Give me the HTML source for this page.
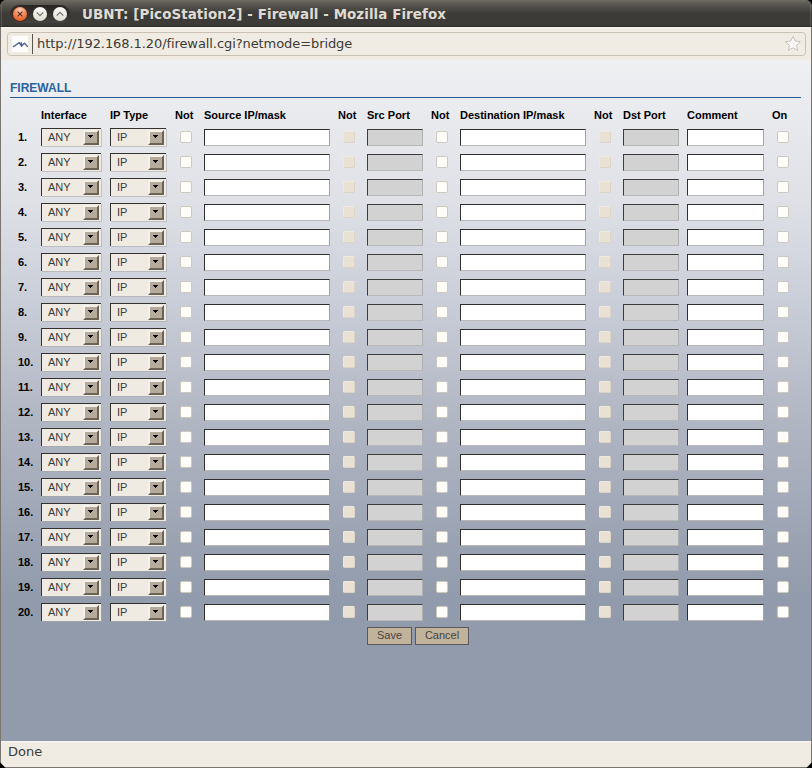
<!DOCTYPE html>
<html><head><meta charset="utf-8"><title>UBNT: [PicoStation2] - Firewall - Mozilla Firefox</title>
<style>
html,body{margin:0;padding:0;}
body{width:812px;height:768px;overflow:hidden;background:#000;position:relative;font-family:"Liberation Sans",Arial,sans-serif;font-size:11px;color:#000;}
#win{position:absolute;left:0;top:0;width:812px;height:768px;overflow:hidden;border-radius:6.5px 6.5px 0 0;background:#7a756e;}
#title{position:absolute;left:0;top:0;width:812px;height:27px;background:linear-gradient(#706d64 0px,#5f5d55 3px,#4c4b45 8px,#3e3d39 13px,#3c3b37 15px,#3c3b37 25px,#2d2c29 26.5px,#2b2a27 27px);}
#title .t{position:absolute;left:82px;top:7px;letter-spacing:0.07px;font-family:"DejaVu Sans",sans-serif;font-weight:bold;font-size:13.45px;color:#dfdbd2;white-space:nowrap;}
#pill{position:absolute;left:10px;top:5px;width:60px;height:18px;border-radius:9px;background:linear-gradient(#262522,#33322e 50%,#45443f);}
.wb{position:absolute;top:7px;width:14px;height:14px;border-radius:50%;}
#tool{position:absolute;left:1px;top:27px;width:810px;height:33px;background:linear-gradient(#f7f5f0 0,#f0ece4 2px,#efebe3 33px);}
#url{position:absolute;left:6px;top:5px;width:797px;height:22px;border:1px solid #c9c2b4;border-radius:3.5px;background:#f0ece3;}
#url .fav{position:absolute;left:4px;top:3px;width:16px;height:16px;background:#fdfdfd;}
#url .star{position:absolute;left:776px;top:1px;}
#url .sep{position:absolute;left:24px;top:1px;width:1px;height:20px;background:#5a564e;}
#url .u{position:absolute;left:29px;top:3px;font-family:"DejaVu Sans",sans-serif;font-size:13px;letter-spacing:-0.08px;color:#3c3b37;white-space:nowrap;}
#content{position:absolute;left:1px;top:60px;width:810px;height:681px;background:linear-gradient(#eef0f2 0px,#dfe1e7 140px,#caced8 240px,#b1b6c3 360px,#9ba3b3 480px,#929bab 540px,#929bab 681px);}
#status{position:absolute;left:1px;top:741px;width:810px;height:26px;background:linear-gradient(#f8f6f2 0,#f0ece4 2px,#efebe3 26px);}
#status span{position:absolute;left:7px;top:3px;font-family:"DejaVu Sans",sans-serif;font-size:13px;color:#3c3b37;}
#fw{position:absolute;left:10px;top:81px;font-weight:bold;font-size:12px;color:#2a62a3;}
#hr{position:absolute;left:10px;top:97px;width:791px;height:1px;background:#295a92;}
.cut{position:absolute;top:764px;width:8px;height:8px;background:#000;transform:rotate(45deg);z-index:5;}
.h{position:absolute;top:109px;font-weight:bold;font-size:11px;white-space:nowrap;}
.row{position:absolute;left:0;width:812px;height:18px;}
.num{position:absolute;left:18px;top:3px;font-weight:bold;}
.sel{position:absolute;top:0;height:18px;box-sizing:border-box;border:solid #33322f;border-width:1px 0 0 1px;background:#efebe3;box-shadow:1px 1px 0 rgba(165,165,165,0.55);}
.st{position:absolute;left:6px;top:2px;color:#3c3b37;}
.sb{position:absolute;right:2px;top:1px;width:16px;height:15px;box-sizing:border-box;background:#b6aa9a;border-style:solid;border-width:2px;border-color:#f4f1eb #6c6357 #6c6357 #f4f1eb;}
.sb i{position:absolute;left:3px;top:3px;width:5px;height:1px;background:#000;}
.sb i:before{content:"";position:absolute;left:1px;top:1px;width:3px;height:1px;background:#000;}
.sb i:after{content:"";position:absolute;left:2px;top:2px;width:1px;height:1px;background:#000;}
.cb{position:absolute;top:3px;width:12px;height:12px;box-sizing:border-box;border:1px solid #cec9bf;border-radius:2px;background:#fffefb;}
.cb.d{background:#eae1d5;border-color:#eee9e1 #ddd4c8 #ddd4c8 #eee9e1;}
.tx{position:absolute;top:1px;height:17px;box-sizing:border-box;border:1px solid;border-color:#2f2f2f #a2a2a2 #b8b8b8 #2f2f2f;background:#fff;}
.tx.d{background:#d2d2d2;border-color:#3c3c3c #b0b0b0 #b8b8b8 #3c3c3c;}
.btn{position:absolute;top:627px;height:18px;box-sizing:border-box;border:1px solid #58585e;background:#c1b29c;color:#48443f;text-align:center;line-height:14px;}
</style></head><body>
<div id="win">
<div id="title"><div style="position:absolute;left:1px;top:5px;width:1px;height:22px;background:rgba(255,255,255,0.13)"></div><div style="position:absolute;left:810px;top:5px;width:1px;height:22px;background:rgba(255,255,255,0.13)"></div><div id="pill"></div>
<div class="wb" style="left:13px;box-shadow:0 0 0 1px #4b2a1d;background:radial-gradient(circle at 50% 22%,#f9cbb6 0,#f19265 40%,#ea6a35 70%,#cf5424 100%)"><svg width="14" height="14" viewBox="0 0 14 14"><path d="M4.6 4.6L9.4 9.4M9.4 4.6L4.6 9.4" stroke="#5a2a18" stroke-width="1.15" fill="none"/></svg></div>
<div class="wb" style="left:33px;background:linear-gradient(#fbfaf7,#e2ded4)"><svg width="14" height="14" viewBox="0 0 14 14"><path d="M3.7 5.4L7 8.7L10.3 5.4" stroke="#77756f" stroke-width="1.3" fill="none"/></svg></div>
<div class="wb" style="left:53px;background:linear-gradient(#fbfaf7,#e2ded4)"><svg width="14" height="14" viewBox="0 0 14 14"><path d="M3.7 8.6L7 5.3L10.3 8.6" stroke="#77756f" stroke-width="1.3" fill="none"/></svg></div>
<div class="t">UBNT: [PicoStation2] - Firewall - Mozilla Firefox</div></div>
<div id="tool"><div id="url"><div class="fav"><svg width="16" height="16" viewBox="0 0 16 16"><path d="M1.5 10.5C3.4 10 5.2 7.6 7.2 6.7L9.6 9.7L12.4 7.2C13.4 7.8 14.4 9.6 15.4 10.4" stroke="#50669a" stroke-width="1.5" fill="none" stroke-linecap="round" stroke-linejoin="round"/><path d="M9.2 6.6L9.7 10.2" stroke="#3d5284" stroke-width="1.2" fill="none" stroke-linecap="round"/></svg></div><div class="sep"></div><svg class="star" width="18" height="18" viewBox="784 34 18 18"><path d="M793 36.2L795.2 41L800.3 41.6L796.6 45.3L797.5 50.3L793 47.8L788.5 50.3L789.4 45.3L785.3 41.6L790.8 41Z" fill="#f9f8f6" stroke="#c6c2ba" stroke-width="1" stroke-linejoin="round"/></svg><div class="u">http://192.168.1.20/firewall.cgi?netmode=bridge</div></div></div>
<div id="content"></div>
<div id="fw">FIREWALL</div><div id="hr"></div>
<span class="h" style="left:41px">Interface</span>
<span class="h" style="left:110px">IP Type</span>
<span class="h" style="left:175px">Not</span>
<span class="h" style="left:204px">Source IP/mask</span>
<span class="h" style="left:338px">Not</span>
<span class="h" style="left:367px">Src Port</span>
<span class="h" style="left:431px">Not</span>
<span class="h" style="left:460px">Destination IP/mask</span>
<span class="h" style="left:594px">Not</span>
<span class="h" style="left:623px">Dst Port</span>
<span class="h" style="left:687px">Comment</span>
<span class="h" style="left:772px">On</span>
<div class="row" style="top:128px"><span class="num">1.</span><span class="sel" style="left:41px;width:60px"><span class="st">ANY</span><span class="sb"><i></i></span></span><span class="sel" style="left:110px;width:56px"><span class="st">IP</span><span class="sb"><i></i></span></span><span class="cb" style="left:180px"></span><span class="tx" style="left:204px;width:126px"></span><span class="cb d" style="left:343px"></span><span class="tx d" style="left:367px;width:56px"></span><span class="cb" style="left:436px"></span><span class="tx" style="left:460px;width:126px"></span><span class="cb d" style="left:599px"></span><span class="tx d" style="left:623px;width:56px"></span><span class="tx" style="left:687px;width:77px"></span><span class="cb" style="left:777px"></span></div>
<div class="row" style="top:153px"><span class="num">2.</span><span class="sel" style="left:41px;width:60px"><span class="st">ANY</span><span class="sb"><i></i></span></span><span class="sel" style="left:110px;width:56px"><span class="st">IP</span><span class="sb"><i></i></span></span><span class="cb" style="left:180px"></span><span class="tx" style="left:204px;width:126px"></span><span class="cb d" style="left:343px"></span><span class="tx d" style="left:367px;width:56px"></span><span class="cb" style="left:436px"></span><span class="tx" style="left:460px;width:126px"></span><span class="cb d" style="left:599px"></span><span class="tx d" style="left:623px;width:56px"></span><span class="tx" style="left:687px;width:77px"></span><span class="cb" style="left:777px"></span></div>
<div class="row" style="top:178px"><span class="num">3.</span><span class="sel" style="left:41px;width:60px"><span class="st">ANY</span><span class="sb"><i></i></span></span><span class="sel" style="left:110px;width:56px"><span class="st">IP</span><span class="sb"><i></i></span></span><span class="cb" style="left:180px"></span><span class="tx" style="left:204px;width:126px"></span><span class="cb d" style="left:343px"></span><span class="tx d" style="left:367px;width:56px"></span><span class="cb" style="left:436px"></span><span class="tx" style="left:460px;width:126px"></span><span class="cb d" style="left:599px"></span><span class="tx d" style="left:623px;width:56px"></span><span class="tx" style="left:687px;width:77px"></span><span class="cb" style="left:777px"></span></div>
<div class="row" style="top:203px"><span class="num">4.</span><span class="sel" style="left:41px;width:60px"><span class="st">ANY</span><span class="sb"><i></i></span></span><span class="sel" style="left:110px;width:56px"><span class="st">IP</span><span class="sb"><i></i></span></span><span class="cb" style="left:180px"></span><span class="tx" style="left:204px;width:126px"></span><span class="cb d" style="left:343px"></span><span class="tx d" style="left:367px;width:56px"></span><span class="cb" style="left:436px"></span><span class="tx" style="left:460px;width:126px"></span><span class="cb d" style="left:599px"></span><span class="tx d" style="left:623px;width:56px"></span><span class="tx" style="left:687px;width:77px"></span><span class="cb" style="left:777px"></span></div>
<div class="row" style="top:228px"><span class="num">5.</span><span class="sel" style="left:41px;width:60px"><span class="st">ANY</span><span class="sb"><i></i></span></span><span class="sel" style="left:110px;width:56px"><span class="st">IP</span><span class="sb"><i></i></span></span><span class="cb" style="left:180px"></span><span class="tx" style="left:204px;width:126px"></span><span class="cb d" style="left:343px"></span><span class="tx d" style="left:367px;width:56px"></span><span class="cb" style="left:436px"></span><span class="tx" style="left:460px;width:126px"></span><span class="cb d" style="left:599px"></span><span class="tx d" style="left:623px;width:56px"></span><span class="tx" style="left:687px;width:77px"></span><span class="cb" style="left:777px"></span></div>
<div class="row" style="top:253px"><span class="num">6.</span><span class="sel" style="left:41px;width:60px"><span class="st">ANY</span><span class="sb"><i></i></span></span><span class="sel" style="left:110px;width:56px"><span class="st">IP</span><span class="sb"><i></i></span></span><span class="cb" style="left:180px"></span><span class="tx" style="left:204px;width:126px"></span><span class="cb d" style="left:343px"></span><span class="tx d" style="left:367px;width:56px"></span><span class="cb" style="left:436px"></span><span class="tx" style="left:460px;width:126px"></span><span class="cb d" style="left:599px"></span><span class="tx d" style="left:623px;width:56px"></span><span class="tx" style="left:687px;width:77px"></span><span class="cb" style="left:777px"></span></div>
<div class="row" style="top:278px"><span class="num">7.</span><span class="sel" style="left:41px;width:60px"><span class="st">ANY</span><span class="sb"><i></i></span></span><span class="sel" style="left:110px;width:56px"><span class="st">IP</span><span class="sb"><i></i></span></span><span class="cb" style="left:180px"></span><span class="tx" style="left:204px;width:126px"></span><span class="cb d" style="left:343px"></span><span class="tx d" style="left:367px;width:56px"></span><span class="cb" style="left:436px"></span><span class="tx" style="left:460px;width:126px"></span><span class="cb d" style="left:599px"></span><span class="tx d" style="left:623px;width:56px"></span><span class="tx" style="left:687px;width:77px"></span><span class="cb" style="left:777px"></span></div>
<div class="row" style="top:303px"><span class="num">8.</span><span class="sel" style="left:41px;width:60px"><span class="st">ANY</span><span class="sb"><i></i></span></span><span class="sel" style="left:110px;width:56px"><span class="st">IP</span><span class="sb"><i></i></span></span><span class="cb" style="left:180px"></span><span class="tx" style="left:204px;width:126px"></span><span class="cb d" style="left:343px"></span><span class="tx d" style="left:367px;width:56px"></span><span class="cb" style="left:436px"></span><span class="tx" style="left:460px;width:126px"></span><span class="cb d" style="left:599px"></span><span class="tx d" style="left:623px;width:56px"></span><span class="tx" style="left:687px;width:77px"></span><span class="cb" style="left:777px"></span></div>
<div class="row" style="top:328px"><span class="num">9.</span><span class="sel" style="left:41px;width:60px"><span class="st">ANY</span><span class="sb"><i></i></span></span><span class="sel" style="left:110px;width:56px"><span class="st">IP</span><span class="sb"><i></i></span></span><span class="cb" style="left:180px"></span><span class="tx" style="left:204px;width:126px"></span><span class="cb d" style="left:343px"></span><span class="tx d" style="left:367px;width:56px"></span><span class="cb" style="left:436px"></span><span class="tx" style="left:460px;width:126px"></span><span class="cb d" style="left:599px"></span><span class="tx d" style="left:623px;width:56px"></span><span class="tx" style="left:687px;width:77px"></span><span class="cb" style="left:777px"></span></div>
<div class="row" style="top:353px"><span class="num">10.</span><span class="sel" style="left:41px;width:60px"><span class="st">ANY</span><span class="sb"><i></i></span></span><span class="sel" style="left:110px;width:56px"><span class="st">IP</span><span class="sb"><i></i></span></span><span class="cb" style="left:180px"></span><span class="tx" style="left:204px;width:126px"></span><span class="cb d" style="left:343px"></span><span class="tx d" style="left:367px;width:56px"></span><span class="cb" style="left:436px"></span><span class="tx" style="left:460px;width:126px"></span><span class="cb d" style="left:599px"></span><span class="tx d" style="left:623px;width:56px"></span><span class="tx" style="left:687px;width:77px"></span><span class="cb" style="left:777px"></span></div>
<div class="row" style="top:378px"><span class="num">11.</span><span class="sel" style="left:41px;width:60px"><span class="st">ANY</span><span class="sb"><i></i></span></span><span class="sel" style="left:110px;width:56px"><span class="st">IP</span><span class="sb"><i></i></span></span><span class="cb" style="left:180px"></span><span class="tx" style="left:204px;width:126px"></span><span class="cb d" style="left:343px"></span><span class="tx d" style="left:367px;width:56px"></span><span class="cb" style="left:436px"></span><span class="tx" style="left:460px;width:126px"></span><span class="cb d" style="left:599px"></span><span class="tx d" style="left:623px;width:56px"></span><span class="tx" style="left:687px;width:77px"></span><span class="cb" style="left:777px"></span></div>
<div class="row" style="top:403px"><span class="num">12.</span><span class="sel" style="left:41px;width:60px"><span class="st">ANY</span><span class="sb"><i></i></span></span><span class="sel" style="left:110px;width:56px"><span class="st">IP</span><span class="sb"><i></i></span></span><span class="cb" style="left:180px"></span><span class="tx" style="left:204px;width:126px"></span><span class="cb d" style="left:343px"></span><span class="tx d" style="left:367px;width:56px"></span><span class="cb" style="left:436px"></span><span class="tx" style="left:460px;width:126px"></span><span class="cb d" style="left:599px"></span><span class="tx d" style="left:623px;width:56px"></span><span class="tx" style="left:687px;width:77px"></span><span class="cb" style="left:777px"></span></div>
<div class="row" style="top:428px"><span class="num">13.</span><span class="sel" style="left:41px;width:60px"><span class="st">ANY</span><span class="sb"><i></i></span></span><span class="sel" style="left:110px;width:56px"><span class="st">IP</span><span class="sb"><i></i></span></span><span class="cb" style="left:180px"></span><span class="tx" style="left:204px;width:126px"></span><span class="cb d" style="left:343px"></span><span class="tx d" style="left:367px;width:56px"></span><span class="cb" style="left:436px"></span><span class="tx" style="left:460px;width:126px"></span><span class="cb d" style="left:599px"></span><span class="tx d" style="left:623px;width:56px"></span><span class="tx" style="left:687px;width:77px"></span><span class="cb" style="left:777px"></span></div>
<div class="row" style="top:453px"><span class="num">14.</span><span class="sel" style="left:41px;width:60px"><span class="st">ANY</span><span class="sb"><i></i></span></span><span class="sel" style="left:110px;width:56px"><span class="st">IP</span><span class="sb"><i></i></span></span><span class="cb" style="left:180px"></span><span class="tx" style="left:204px;width:126px"></span><span class="cb d" style="left:343px"></span><span class="tx d" style="left:367px;width:56px"></span><span class="cb" style="left:436px"></span><span class="tx" style="left:460px;width:126px"></span><span class="cb d" style="left:599px"></span><span class="tx d" style="left:623px;width:56px"></span><span class="tx" style="left:687px;width:77px"></span><span class="cb" style="left:777px"></span></div>
<div class="row" style="top:478px"><span class="num">15.</span><span class="sel" style="left:41px;width:60px"><span class="st">ANY</span><span class="sb"><i></i></span></span><span class="sel" style="left:110px;width:56px"><span class="st">IP</span><span class="sb"><i></i></span></span><span class="cb" style="left:180px"></span><span class="tx" style="left:204px;width:126px"></span><span class="cb d" style="left:343px"></span><span class="tx d" style="left:367px;width:56px"></span><span class="cb" style="left:436px"></span><span class="tx" style="left:460px;width:126px"></span><span class="cb d" style="left:599px"></span><span class="tx d" style="left:623px;width:56px"></span><span class="tx" style="left:687px;width:77px"></span><span class="cb" style="left:777px"></span></div>
<div class="row" style="top:503px"><span class="num">16.</span><span class="sel" style="left:41px;width:60px"><span class="st">ANY</span><span class="sb"><i></i></span></span><span class="sel" style="left:110px;width:56px"><span class="st">IP</span><span class="sb"><i></i></span></span><span class="cb" style="left:180px"></span><span class="tx" style="left:204px;width:126px"></span><span class="cb d" style="left:343px"></span><span class="tx d" style="left:367px;width:56px"></span><span class="cb" style="left:436px"></span><span class="tx" style="left:460px;width:126px"></span><span class="cb d" style="left:599px"></span><span class="tx d" style="left:623px;width:56px"></span><span class="tx" style="left:687px;width:77px"></span><span class="cb" style="left:777px"></span></div>
<div class="row" style="top:528px"><span class="num">17.</span><span class="sel" style="left:41px;width:60px"><span class="st">ANY</span><span class="sb"><i></i></span></span><span class="sel" style="left:110px;width:56px"><span class="st">IP</span><span class="sb"><i></i></span></span><span class="cb" style="left:180px"></span><span class="tx" style="left:204px;width:126px"></span><span class="cb d" style="left:343px"></span><span class="tx d" style="left:367px;width:56px"></span><span class="cb" style="left:436px"></span><span class="tx" style="left:460px;width:126px"></span><span class="cb d" style="left:599px"></span><span class="tx d" style="left:623px;width:56px"></span><span class="tx" style="left:687px;width:77px"></span><span class="cb" style="left:777px"></span></div>
<div class="row" style="top:553px"><span class="num">18.</span><span class="sel" style="left:41px;width:60px"><span class="st">ANY</span><span class="sb"><i></i></span></span><span class="sel" style="left:110px;width:56px"><span class="st">IP</span><span class="sb"><i></i></span></span><span class="cb" style="left:180px"></span><span class="tx" style="left:204px;width:126px"></span><span class="cb d" style="left:343px"></span><span class="tx d" style="left:367px;width:56px"></span><span class="cb" style="left:436px"></span><span class="tx" style="left:460px;width:126px"></span><span class="cb d" style="left:599px"></span><span class="tx d" style="left:623px;width:56px"></span><span class="tx" style="left:687px;width:77px"></span><span class="cb" style="left:777px"></span></div>
<div class="row" style="top:578px"><span class="num">19.</span><span class="sel" style="left:41px;width:60px"><span class="st">ANY</span><span class="sb"><i></i></span></span><span class="sel" style="left:110px;width:56px"><span class="st">IP</span><span class="sb"><i></i></span></span><span class="cb" style="left:180px"></span><span class="tx" style="left:204px;width:126px"></span><span class="cb d" style="left:343px"></span><span class="tx d" style="left:367px;width:56px"></span><span class="cb" style="left:436px"></span><span class="tx" style="left:460px;width:126px"></span><span class="cb d" style="left:599px"></span><span class="tx d" style="left:623px;width:56px"></span><span class="tx" style="left:687px;width:77px"></span><span class="cb" style="left:777px"></span></div>
<div class="row" style="top:603px"><span class="num">20.</span><span class="sel" style="left:41px;width:60px"><span class="st">ANY</span><span class="sb"><i></i></span></span><span class="sel" style="left:110px;width:56px"><span class="st">IP</span><span class="sb"><i></i></span></span><span class="cb" style="left:180px"></span><span class="tx" style="left:204px;width:126px"></span><span class="cb d" style="left:343px"></span><span class="tx d" style="left:367px;width:56px"></span><span class="cb" style="left:436px"></span><span class="tx" style="left:460px;width:126px"></span><span class="cb d" style="left:599px"></span><span class="tx d" style="left:623px;width:56px"></span><span class="tx" style="left:687px;width:77px"></span><span class="cb" style="left:777px"></span></div>
<div class="btn" style="left:367px;width:45px">Save</div>
<div class="btn" style="left:415px;width:54px">Cancel</div>
<div class="cut" style="left:-4px"></div><div class="cut" style="left:808px"></div><div id="status"><span>Done</span></div>
</div>
</body></html>
